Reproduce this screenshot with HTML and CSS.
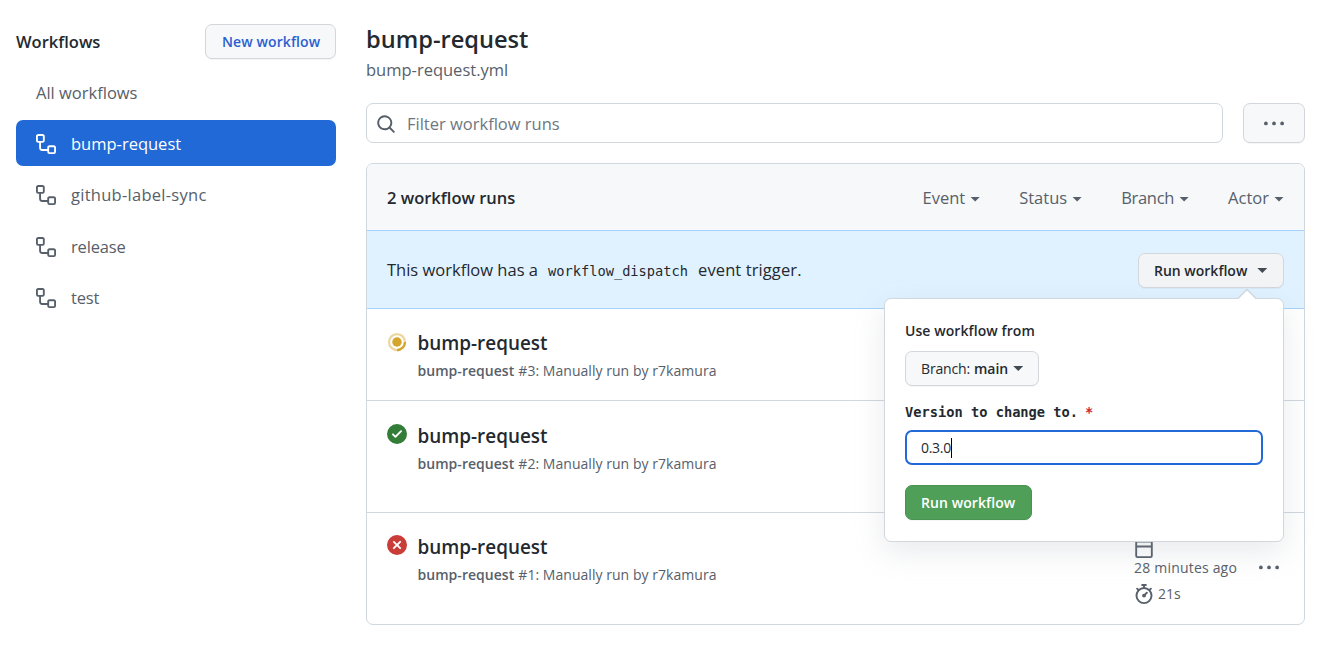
FILE: index.html
```html
<!DOCTYPE html>
<html lang="en">
<head>
<meta charset="utf-8">
<title>Workflow runs</title>
<link rel="stylesheet" href="styles.css">
</head>
<body>
<svg width="0" height="0" class="sprite" aria-hidden="true">
  <symbol id="workflow" viewBox="0 0 16 16"><path fill-rule="evenodd" d="M0 1.75C0 .784.784 0 1.75 0h3.5C6.216 0 7 .784 7 1.75v3.5A1.75 1.75 0 015.25 7H4v4a1 1 0 001 1h4v-1.25C9 9.784 9.784 9 10.75 9h3.5c.966 0 1.75.784 1.75 1.75v3.5A1.75 1.75 0 0114.25 16h-3.5A1.75 1.75 0 019 14.25v-.75H5A2.5 2.5 0 012.5 11V7h-.75A1.75 1.75 0 010 5.25v-3.5zm1.75-.25a.25.25 0 00-.25.25v3.5c0 .138.112.25.25.25h3.5a.25.25 0 00.25-.25v-3.5a.25.25 0 00-.25-.25h-3.5zm9 9a.25.25 0 00-.25.25v3.5c0 .138.112.25.25.25h3.5a.25.25 0 00.25-.25v-3.5a.25.25 0 00-.25-.25h-3.5z"/></symbol>
  <symbol id="search" viewBox="0 0 16 16"><path fill-rule="evenodd" d="M11.5 7a4.499 4.499 0 11-8.998 0A4.499 4.499 0 0111.5 7zm-.82 4.74a6 6 0 111.06-1.06l3.04 3.04a.75.75 0 11-1.06 1.06l-3.04-3.04z"/></symbol>
  <symbol id="kebab" viewBox="0 0 16 16"><circle cx="1.5" cy="7.5" r="1.5"/><circle cx="8" cy="7.5" r="1.5"/><circle cx="14.5" cy="7.5" r="1.5"/></symbol>
  <symbol id="check" viewBox="0 0 16 16"><path fill-rule="evenodd" d="M8 16A8 8 0 108 0a8 8 0 000 16zm3.78-9.72a.75.75 0 00-1.06-1.06L6.75 9.19 5.28 7.72a.75.75 0 00-1.06 1.06l2 2a.75.75 0 001.06 0l4.5-4.5z"/></symbol>
  <symbol id="cross" viewBox="0 0 16 16"><path fill-rule="evenodd" d="M2.343 13.657A8 8 0 1113.657 2.343 8 8 0 012.343 13.657zM6.03 4.97a.75.75 0 00-1.06 1.06L6.94 8 4.97 9.97a.75.75 0 101.06 1.06L8 9.06l1.97 1.97a.75.75 0 101.06-1.06L9.06 8l1.97-1.97a.75.75 0 10-1.06-1.06L8 6.94 6.03 4.97z"/></symbol>
  <symbol id="calendar" viewBox="0 0 16 16"><path fill-rule="evenodd" d="M4.75 0a.75.75 0 01.75.75V2h5V.75a.75.75 0 011.5 0V2h1.25c.966 0 1.75.784 1.75 1.75v10.5A1.75 1.75 0 0113.25 16H2.75A1.75 1.75 0 011 14.25V3.75C1 2.784 1.784 2 2.75 2H4V.75A.75.75 0 014.75 0zm0 3.5h8.5a.25.25 0 01.25.25V6h-11V3.75a.25.25 0 01.25-.25h2zm-2.25 4v6.75c0 .138.112.25.25.25h10.5a.25.25 0 00.25-.25V7.5h-11z"/></symbol>
  <symbol id="stopwatch" viewBox="0 0 16 16"><path fill-rule="evenodd" d="M5.75.75A.75.75 0 016.5 0h3a.75.75 0 010 1.5h-.75v1l-.001.041a6.718 6.718 0 013.464 1.435l.007-.006.75-.75a.75.75 0 111.06 1.06l-.75.75-.006.007a6.75 6.75 0 11-10.548 0L2.72 5.03l-.75-.75a.75.75 0 011.06-1.06l.75.75.007.006A6.718 6.718 0 017.25 2.541a.756.756 0 010-.041v-1H6.5a.75.75 0 01-.75-.75zM8 14.5A5.25 5.25 0 108 4a5.25 5.25 0 000 10.5zm.389-6.7l1.33-1.33a.75.75 0 111.061 1.06L9.45 8.861A1.502 1.502 0 018 10.75a1.5 1.5 0 11.389-2.95z"/></symbol>
  <symbol id="progress" viewBox="0 0 16 16"><circle cx="8" cy="8" r="6.4" fill="none" stroke="#d4a72c" stroke-opacity=".45" stroke-width="1.8"/><path d="M14.4 8A6.4 6.4 0 018 14.4" fill="none" stroke="#d4a72c" stroke-width="1.8"/><circle cx="8" cy="8" r="3.8"/></symbol>
</svg>
<div class="page">
  <aside class="sidebar">
    <div class="sidebar-head">
      <h2 class="sidebar-title">Workflows</h2>
      <a class="btn new-btn">New workflow</a>
    </div>
    <nav class="menu">
      <a class="item all"><span>All workflows</span></a>
      <a class="item active"><svg class="icon"><use href="#workflow"/></svg><span>bump-request</span></a>
      <a class="item"><svg class="icon"><use href="#workflow"/></svg><span class="loose">github-label-sync</span></a>
      <a class="item"><svg class="icon"><use href="#workflow"/></svg><span class="tight">release</span></a>
      <a class="item"><svg class="icon"><use href="#workflow"/></svg><span class="tight">test</span></a>
    </nav>
  </aside>
  <main class="content">
    <h1 class="title">bump-request</h1>
    <div class="file">bump-request.yml</div>
    <div class="toolbar">
      <div class="filter"><svg class="icon"><use href="#search"/></svg><span>Filter workflow runs</span></div>
      <a class="btn more-btn"><svg class="icon"><use href="#kebab"/></svg></a>
    </div>
    <section class="box">
      <header class="box-head">
        <strong class="count">2 workflow runs</strong>
        <div class="facets">
          <span class="facet">Event<i class="caret"></i></span>
          <span class="facet">Status<i class="caret"></i></span>
          <span class="facet"><span class="tighter">Branch</span><i class="caret"></i></span>
          <span class="facet"><span>Actor</span><i class="caret"></i></span>
        </div>
      </header>
      <div class="banner">
        <p class="banner-text"><span>This workflow has a</span><code>workflow_dispatch</code><span class="trigger">event trigger.</span></p>
        <div class="dispatch">
          <a class="btn run-btn">Run workflow<i class="caret"></i></a>
          <div class="popover">
            <div class="pop-title">Use workflow from</div>
            <a class="btn branch-btn"><span class="tight">Branch:</span><b>main</b><i class="caret"></i></a>
            <div class="field-label"><span>Version to change to.</span><em>*</em></div>
            <div class="field"><span class="tighter">0.3.0</span><i class="cursor"></i></div>
            <a class="btn submit">Run workflow</a>
          </div>
        </div>
      </div>
      <article class="run short">
        <svg class="icon pending"><use href="#progress"/></svg>
        <div class="run-text"><h3 class="run-title">bump-request</h3><p class="run-sub"><b>bump-request</b><span>#3: Manually run by r7kamura</span></p></div>
      </article>
      <article class="run middle">
        <svg class="icon success"><use href="#check"/></svg>
        <div class="run-text"><h3 class="run-title">bump-request</h3><p class="run-sub"><b>bump-request</b><span>#2: Manually run by r7kamura</span></p></div>
      </article>
      <article class="run">
        <svg class="icon failure"><use href="#cross"/></svg>
        <div class="run-text"><h3 class="run-title">bump-request</h3><p class="run-sub"><b>bump-request</b><span>#1: Manually run by r7kamura</span></p></div>
        <div class="meta">
          <svg class="icon"><use href="#calendar"/></svg>
          <span class="ago">28 minutes ago</span>
          <span class="duration"><svg class="icon"><use href="#stopwatch"/></svg><span>21s</span></span>
        </div>
        <svg class="icon run-more"><use href="#kebab"/></svg>
      </article>
    </section>
  </main>
</div>
</body>
</html>
```
FILE: styles.css
```css
* { box-sizing: border-box; }
body {
  margin: 0;
  width: 1327px;
  height: 646px;
  overflow: hidden;
  background: #fff;
  color: #24292f;
  font: 400 16.5px/26px "Open Sans", "Noto Sans", sans-serif;
}
h1, h2, h3, p { margin: 0; }
i, em { font-style: normal; }
.sprite { display: block; }
.icon { width: 20px; height: 20px; flex: none; display: block; fill: #57606a; }
.loose { letter-spacing: .27px; }
.tight { letter-spacing: -.16px; }
.tighter { letter-spacing: -.29px; }
.page { display: flex; gap: 30px; padding: 24px 22px 0 16px; }
.sidebar { width: 320px; flex: none; }
.sidebar-head { display: flex; align-items: center; justify-content: space-between; height: 35px; }
.sidebar-title { font-size: 16.5px; font-weight: 600; }
.btn {
  display: inline-flex;
  align-items: center;
  height: 35px;
  padding: 0 15px;
  border: 1px solid #d3d7db;
  border-radius: 7px;
  background: #f6f8fa;
  box-shadow: 0 1px 0 rgba(27, 31, 36, .04);
  font-size: 14px;
  font-weight: 600;
  white-space: nowrap;
}
.new-btn { width: 131px; padding-left: 16px; color: #2c5fd0; letter-spacing: .1px; }
.menu { display: grid; gap: 5.25px; margin-top: 9.5px; }
.item {
  display: flex;
  align-items: center;
  gap: 15px;
  height: 46.25px;
  padding: 1px 20px 0;
  border-radius: 7px;
  color: #57606a;
}
.all { padding-top: 3px; }
.active { background: #2169d6; color: #fff; }
.active .icon { fill: #fff; }
.content { width: 939px; flex: none; }
.title { font-size: 23.6px; line-height: 30px; font-weight: 600; }
.file { padding-top: 2px; color: #57606a; line-height: 28px; }
.toolbar { display: flex; gap: 20px; margin-top: 19px; }
.filter {
  display: flex;
  align-items: center;
  gap: 11px;
  flex: 1;
  height: 40px;
  padding: 1px 0 0 9px;
  border: 1px solid #d0d7de;
  border-radius: 7px;
  color: #6e7781;
}
.more-btn { width: 62px; height: 40px; padding: 1px 20px 0; }
.box { margin-top: 20px; border: 1px solid #d0d7de; border-radius: 7px; }
.box-head {
  display: flex;
  align-items: center;
  justify-content: space-between;
  height: 66px;
  padding: 2px 20px 0;
  border-radius: 6px 6px 0 0;
  background: #f6f8fa;
}
.count { font-weight: 600; }
.facets { display: flex; gap: 39px; color: #57606a; }
.facet { display: flex; align-items: center; gap: 5px; }
.caret { width: 10px; height: 5px; flex: none; background: #57606a; clip-path: polygon(0 0, 100% 0, 50% 100%); }
.facet .caret { margin-top: 2px; }
.banner {
  display: flex;
  align-items: center;
  justify-content: space-between;
  height: 79px;
  padding: 1px 20px 0;
  border-top: 1px solid #a5d3fb;
  border-bottom: 1px solid #a5d3fb;
  background: #e0f2ff;
}
.banner-text { display: flex; align-items: baseline; }
.banner-text code { margin: 0 10px; font: 13.7px "DejaVu Sans Mono", monospace; }
.trigger { letter-spacing: .1px; }
.dispatch { position: relative; height: 35px; }
.run-btn { width: 146px; gap: 10px; padding-top: 1px; background: #f3f4f6; }
.run-btn .caret, .branch-btn .caret { background: #424a53; }
.popover {
  position: absolute;
  z-index: 2;
  top: 45px;
  right: 0;
  width: 400px;
  height: 244px;
  padding: 19px 20px 0;
  border: 1px solid #d0d7de;
  border-radius: 7px;
  background: #fff;
  box-shadow: 0 10px 30px rgba(140, 149, 159, .2);
}
.popover::before, .popover::after {
  content: "";
  position: absolute;
  right: 26px;
  top: -10px;
  width: 20px;
  height: 10px;
  background: #d0d7de;
  clip-path: polygon(50% 0, 100% 100%, 0 100%);
}
.popover::after { top: -8px; background: #fff; }
.pop-title { font-size: 14px; font-weight: 600; letter-spacing: .08px; }
.branch-btn { margin-top: 7px; width: 134px; padding-top: 1px; font-weight: 400; }
.branch-btn b { margin: 0 5px 0 4px; font-weight: 600; }
.field-label { display: flex; gap: 7px; margin-top: 14px; font: 700 13.7px/24px "DejaVu Sans Mono", monospace; }
.field-label em { color: #cf222e; }
.field {
  display: flex;
  align-items: center;
  margin-top: 6px;
  height: 35px;
  padding: 1px 14px 0;
  border: 2px solid #2169d6;
  border-radius: 7px;
  font-size: 14px;
}
.cursor { width: 1px; height: 20px; background: #000; }
.submit { width: 127px; padding-top: 1px; margin-top: 20px; border-color: #489351; background: #4f9f58; color: #fff; letter-spacing: .08px; }
.run {
  display: flex;
  height: 112px;
  padding: 21px 20px 0;
  border-top: 1px solid #d0d7de;
}
.short { height: 91px; border-top: 0; }
.middle { padding-top: 22px; }
.run-text { margin-left: 10.5px; flex: 1; }
.run-title { font-size: 18.9px; line-height: 27px; font-weight: 600; }
.run-sub { display: flex; gap: 4px; margin-top: 1px; font-size: 14px; color: #57606a; letter-spacing: .04px; }
.run-sub b { font-weight: 600; }
.run .success, .run .failure { margin-top: 1px; }
.run .pending { margin-top: 2px; }
.pending { fill: #d4a72c; }
.success { fill: #347d39; }
.failure { fill: #c93c37; }
.meta { display: flex; flex-direction: column; margin-top: 4px; font-size: 14px; color: #57606a; }
.ago { line-height: 20px; letter-spacing: .19px; }
.duration { display: flex; gap: 4px; align-items: center; margin-top: 3px; }
.run-more { margin: 24px 5px 0 22px; }
```
